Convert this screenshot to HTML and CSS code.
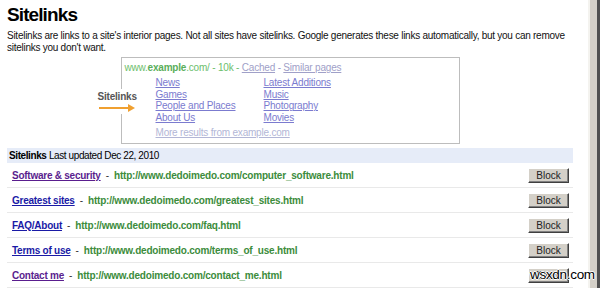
FILE: index.html
```html
<!DOCTYPE html>
<html lang="en">
<head>
  <meta charset="UTF-8">
  <title>Sitelinks</title>
  <link rel="stylesheet" href="styles.css">
</head>
<body>

<div id="page">
  <h1 class="title">Sitelinks</h1>
  <p class="intro">Sitelinks are links to a site's interior pages. Not all sites have sitelinks. Google generates these links automatically, but you can remove sitelinks you don't want.</p>

  <div class="demo">
    <div class="demoBox">
      <div class="callout">
        <div class="calloutLabel">Sitelinks</div>
        <svg class="calloutArrow" width="36" height="8" viewBox="0 0 36 8">
          <line x1="0" y1="4" x2="30" y2="4" stroke="#f0a030" stroke-width="2"/>
          <polygon points="29,0 36,4 29,8" fill="#f0a030"/>
        </svg>
      </div>
      <div class="demoUrl"><span class="green">www.<b>example</b>.com/ - 10k - </span><a href="#">Cached</a> - <a href="#">Similar pages</a></div>
      <div class="demoLinks">
        <a href="#">News</a><a href="#">Latest Additions</a>
        <a href="#">Games</a><a href="#">Music</a>
        <a href="#">People and Places</a><a href="#">Photography</a>
        <a href="#">About Us</a><a href="#">Movies</a>
      </div>
      <div class="demoMore"><a href="#">More results from example.com</a></div>
    </div>
  </div>

  <div class="listHeader"><b>Sitelinks</b> Last updated Dec 22, 2010</div>

  <div class="siteRow">
    <a class="siteName visited" href="#">Software &amp; security</a>
    <span class="dash">-</span>
    <span class="siteUrl">http://www.dedoimedo.com/computer_software.html</span>
    <button class="blockButton">Block</button>
  </div>
  <div class="siteRow">
    <a class="siteName" href="#">Greatest sites</a>
    <span class="dash">-</span>
    <span class="siteUrl">http://www.dedoimedo.com/greatest_sites.html</span>
    <button class="blockButton">Block</button>
  </div>
  <div class="siteRow">
    <a class="siteName" href="#">FAQ/About</a>
    <span class="dash">-</span>
    <span class="siteUrl">http://www.dedoimedo.com/faq.html</span>
    <button class="blockButton">Block</button>
  </div>
  <div class="siteRow">
    <a class="siteName" href="#">Terms of use</a>
    <span class="dash">-</span>
    <span class="siteUrl">http://www.dedoimedo.com/terms_of_use.html</span>
    <button class="blockButton">Block</button>
  </div>
  <div class="siteRow">
    <a class="siteName visited" href="#">Contact me</a>
    <span class="dash">-</span>
    <span class="siteUrl">http://www.dedoimedo.com/contact_me.html</span>
    <button class="blockButton">Block</button>
  </div>
</div>

<div id="frame"></div>

<div class="watermark">wsxdn.com</div>

</body>
</html>
```

FILE: styles.css
```css
body {
  margin: 0;
  font-family: "Liberation Sans", Arial, sans-serif;
  background-color: #FFFFFF;
  color: #000000;
  display: flex;
  height: 288px;
  overflow: hidden;
}

#page {
  flex: 1;
  padding: 0 15px 0 7px;
}

#frame {
  width: 7px;
  border-left: 2px solid #F4F3EF;
  border-right: 3px solid #505050;
  background-color: #D4D0C8;
}

.title {
  margin: 5px 0 0 0;
  font-size: 19px;
  line-height: 20px;
  letter-spacing: -0.9px;
}

.intro {
  margin: 5px 0 0 0;
  font-size: 10px;
  line-height: 12px;
  letter-spacing: -0.26px;
  color: #111;
}

.demo {
  display: flex;
  justify-content: center;
  margin-top: 3px;
}

.demoBox {
  position: relative;
  width: 332px;
  border: 1px solid #BDBDBD;
  padding: 4px 2px 4px 3px;
  font-size: 10px;
  line-height: 12px;
  letter-spacing: -0.2px;
  color: #9A9ACB;
}

.demoBox a {
  color: #7B7BCF;
}

.demoUrl a {
  color: #A0A0C8;
}

.green {
  color: #6DBE6D;
}

.green b {
  color: #5AAE5A;
}

.demoLinks {
  display: grid;
  grid-template-columns: 108px auto;
  margin: 3px 0 0 31px;
  line-height: 11.7px;
}

.demoMore {
  margin: 3px 0 0 31px;
}

.demoMore a {
  color: #B2B6D6;
}

.callout {
  position: absolute;
  left: -25px;
  top: 31px;
  width: 42px;
  padding: 2px 0;
  background-color: #FFFFFF;
}

.calloutLabel {
  font-weight: bold;
  color: #555555;
  padding-left: 1px;
  line-height: 12px;
  letter-spacing: -0.2px;
}

.calloutArrow {
  display: block;
  margin: 1px 0 0 2px;
}

.listHeader {
  margin-top: 4px;
  height: 15px;
  line-height: 15px;
  padding-left: 2px;
  background-color: #E6ECF8;
  font-size: 10px;
  letter-spacing: -0.4px;
}

.siteRow {
  display: flex;
  align-items: center;
  height: 23px;
  border-bottom: 1px solid #E9E9E9;
  padding: 1px 4px 0 5px;
  font-size: 10px;
  font-weight: bold;
}

.siteName {
  color: #1A1AA6;
  letter-spacing: -0.25px;
}

.siteName.visited {
  color: #5A1E8E;
}

.dash {
  margin: 0 5px;
  font-weight: normal;
  color: #333;
}

.siteUrl {
  color: #3C8C3C;
  letter-spacing: -0.2px;
}

.blockButton {
  margin-left: auto;
  width: 41px;
  height: 15px;
  padding: 0;
  font-family: "Liberation Sans", Arial, sans-serif;
  font-size: 10px;
  color: #222;
  background-color: #D4D0C8;
  border: 1px solid;
  border-color: #FFFFFF #404040 #404040 #FFFFFF;
  box-shadow: inset -1px -1px #808080;
}

.watermark {
  position: absolute;
  left: 530px;
  top: 267px;
  font-family: "Liberation Sans", Arial, sans-serif;
  font-size: 13.5px;
  color: #000;
  letter-spacing: -0.3px;
  text-shadow: 1px 0 #fff, -1px 0 #fff, 0 1px #fff, 0 -1px #fff;
}
```
